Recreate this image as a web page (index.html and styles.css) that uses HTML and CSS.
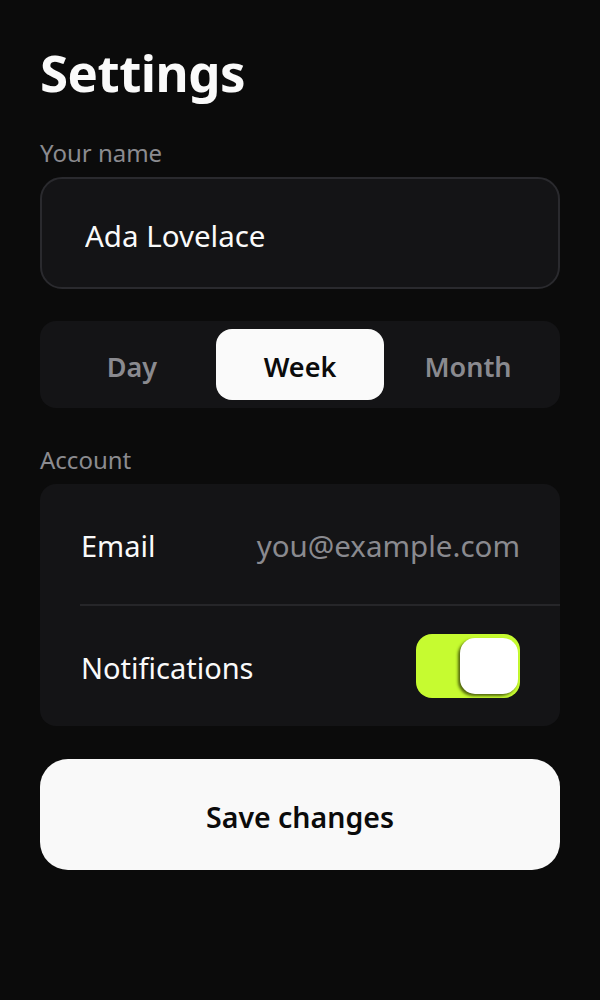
FILE: index.html
```html
<!DOCTYPE html>
<html lang="en">
<head>
<meta charset="utf-8">
<title>Settings</title>
<link rel="stylesheet" href="styles.css">
</head>
<body>
<main class="page">
  <h1 class="title">Settings</h1>

  <label class="field-label" for="name">Your name</label>
  <div class="input-box">
    <input id="name" class="input" type="text" value="Ada Lovelace">
  </div>

  <div class="segmented">
    <button class="segment">Day</button>
    <button class="segment active">Week</button>
    <button class="segment">Month</button>
  </div>

  <div class="section-label">Account</div>
  <div class="card">
    <div class="row">
      <span class="row-label">Email</span>
      <span class="row-value">you@example.com</span>
    </div>
    <div class="divider"></div>
    <div class="row">
      <span class="row-label">Notifications</span>
      <span class="toggle"><span class="knob"></span></span>
    </div>
  </div>

  <button class="save">Save changes</button>
</main>
</body>
</html>
```

FILE: styles.css
```css
* { box-sizing: border-box; }

html, body {
  margin: 0;
  background: #0b0b0b;
}

body {
  font-family: "Noto Sans", "Open Sans", "Liberation Sans", sans-serif;
  color: #f5f5f5;
}

.page {
  display: flex;
  flex-direction: column;
  padding: 41px 40px 0 40px;
}

.title {
  margin: 0;
  font-size: 51px;
  line-height: 62px;
  font-weight: 700;
  color: #fafafa;
  letter-spacing: -0.5px;
}

.field-label,
.section-label {
  display: block;
  font-size: 24px;
  line-height: 24px;
  color: #8b8b90;
}

.field-label {
  margin-top: 38px;
}

.input-box {
  margin-top: 12px;
  height: 112px;
  border: 2px solid #2a2a2e;
  border-radius: 22px;
  background: #141416;
  display: flex;
  align-items: center;
  padding: 4px 43px 0 43px;
}

.input {
  width: 100%;
  border: none;
  outline: none;
  background: transparent;
  font-family: inherit;
  font-size: 29.5px;
  color: #fafafa;
  padding: 0;
}

.segmented {
  margin-top: 32px;
  height: 87px;
  background: #141416;
  border-radius: 16px;
  padding: 8px;
  display: grid;
  grid-template-columns: 1fr 1fr 1fr;
}

.segment {
  border: none;
  background: transparent;
  font-family: inherit;
  font-size: 27px;
  font-weight: 600;
  color: #8a8a8f;
  border-radius: 16px;
  padding: 3px 0 0 0;
}

.segment.active {
  background: #fafafa;
  color: #0b0b0b;
}

.section-label {
  margin-top: 40px;
}

.card {
  margin-top: 12px;
  background: #141416;
  border-radius: 16px;
  display: flex;
  flex-direction: column;
}

.row {
  height: 120px;
  display: flex;
  align-items: center;
  justify-content: space-between;
  padding: 0 40px 0 41px;
}

.row-label {
  font-size: 29px;
  color: #fafafa;
  padding-top: 3px;
}

.row-value {
  font-size: 29.5px;
  color: #8a8a8f;
  padding-top: 3px;
}

.divider {
  height: 2px;
  margin-left: 40px;
  background: #262629;
}

.toggle {
  width: 104px;
  height: 64px;
  border-radius: 16px;
  background: #c6fb30;
  display: flex;
  align-items: center;
  justify-content: flex-end;
  padding: 0 2px;
}

.knob {
  width: 58px;
  height: 56px;
  border-radius: 15px;
  background: #ffffff;
  box-shadow: -2px 2px 3px rgba(40, 50, 0, 0.75);
}

.save {
  margin-top: 33px;
  height: 111px;
  border: none;
  border-radius: 28px;
  background: #f9f9f9;
  font-family: inherit;
  font-size: 28.5px;
  font-weight: 600;
  color: #0b0b0b;
  padding: 4px 0 0 0;
}
```
